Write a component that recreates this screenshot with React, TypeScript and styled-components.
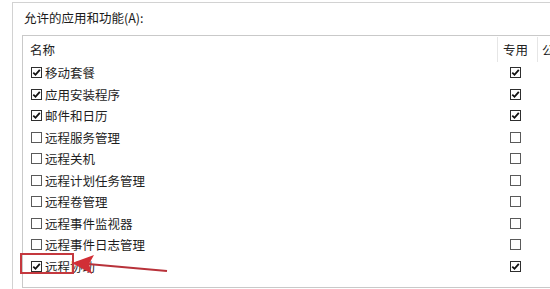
import React, {FC} from 'react';
import styled, {createGlobalStyle} from 'styled-components';

interface IApp {
    name: string;
    allowed: boolean;
    privateNet: boolean;
}

const apps: IApp[] = [
    {name: '移动套餐', allowed: true, privateNet: true},
    {name: '应用安装程序', allowed: true, privateNet: true},
    {name: '邮件和日历', allowed: true, privateNet: true},
    {name: '远程服务管理', allowed: false, privateNet: false},
    {name: '远程关机', allowed: false, privateNet: false},
    {name: '远程计划任务管理', allowed: false, privateNet: false},
    {name: '远程卷管理', allowed: false, privateNet: false},
    {name: '远程事件监视器', allowed: false, privateNet: false},
    {name: '远程事件日志管理', allowed: false, privateNet: false},
    {name: '远程协助', allowed: true, privateNet: true},
];

const GlobalStyle = createGlobalStyle`
  html, body {
    margin: 0;
    padding: 0;
    background: #ffffff;
    overflow: hidden;
  }

  body {
    font-family: "Noto Sans CJK SC", "Liberation Sans", sans-serif;
    color: #1e1e1e;
  }
`;

const Page = styled.div`
  position: relative;
  width: 550px;
  height: 289px;
  overflow: hidden;
  padding: 2px 0 0 12px;
  box-sizing: border-box;
`;

const Group = styled.div`
  width: 620px;
  height: 300px;
  border-left: 1px solid #d2d2d2;
  border-top: 1px solid #d2d2d2;
  padding: 5px 0 0 9px;
  box-sizing: border-box;
`;

const GroupLabel = styled.div`
  height: 20px;
  line-height: 20px;
  padding-left: 2px;
  font-size: 12.5px;
  color: #1a1a1a;
`;

const ListBox = styled.div`
  margin-top: 7px;
  width: 620px;
  height: 253px;
  border: 1px solid #c9c9c9;
  border-right: none;
  box-sizing: border-box;
`;

const Columns = styled.div`
  display: grid;
  grid-template-columns: 474px 40px 1fr;
`;

const HeaderRow = styled(Columns)`
  height: 25px;
  padding-top: 1px;
  font-size: 12.5px;
`;

const HeaderCell = styled.div<{ $divider?: boolean; $center?: boolean }>`
  display: flex;
  align-items: center;
  justify-content: ${p => (p.$center ? 'center' : 'flex-start')};
  padding-left: ${p => (p.$center ? '0' : p.$divider ? '4px' : '7px')};
  border-left: ${p => (p.$divider ? '1px solid #e6e6e6' : 'none')};
  padding-right: ${p => (p.$center ? '4px' : '0')};
  color: #222;
`;

const Row = styled(Columns)`
  height: 21.5px;
  font-size: 12.5px;
`;

const NameCell = styled.div`
  display: flex;
  align-items: center;
  gap: 3px;
  padding-left: 8px;
  white-space: nowrap;
`;

const BoxCell = styled.div`
  display: flex;
  align-items: center;
  justify-content: center;
  padding-right: 3px;
`;

const Box = styled.span<{ $checked: boolean }>`
  display: inline-flex;
  align-items: center;
  justify-content: center;
  width: 11px;
  height: 11px;
  box-sizing: border-box;
  border: 1px solid ${p => (p.$checked ? '#2e2e2e' : '#5a5a5a')};
  background: #fff;
  flex-shrink: 0;
`;

const Overlay = styled.svg`
  position: absolute;
  left: 0;
  top: 0;
  pointer-events: none;
`;

const CheckBox: FC<{ checked: boolean }> = ({checked}) => (
    <Box $checked={checked}>
        {checked &&
            <svg width="9" height="9" viewBox="0 0 9 9">
                <path d="M1.3 4.6 L3.5 6.8 L7.8 1.8" fill="none" stroke="#111" strokeWidth="1.8"/>
            </svg>
        }
    </Box>
);

const App: FC = () => {
    return (
        <>
            <GlobalStyle/>
            <Page>
                <Group>
                    <GroupLabel>允许的应用和功能(A):</GroupLabel>
                    <ListBox>
                        <HeaderRow>
                            <HeaderCell>名称</HeaderCell>
                            <HeaderCell $divider $center>专用</HeaderCell>
                            <HeaderCell $divider>公用</HeaderCell>
                        </HeaderRow>
                        {apps.map(app => (
                            <Row key={app.name}>
                                <NameCell>
                                    <CheckBox checked={app.allowed}/>
                                    {app.name}
                                </NameCell>
                                <BoxCell>
                                    <CheckBox checked={app.privateNet}/>
                                </BoxCell>
                                <div/>
                            </Row>
                        ))}
                    </ListBox>
                </Group>
                <Overlay width="550" height="289" viewBox="0 0 550 289">
                    <rect x="21" y="254" width="52" height="19" fill="none" stroke="#c4383e" strokeWidth="2"/>
                    <line x1="167" y1="271" x2="88" y2="264" stroke="#b8323a" strokeWidth="2.2"/>
                    <polygon points="72,263 94,255 89,264 92,274" fill="#d12f36"/>
                </Overlay>
            </Page>
        </>
    );
};

export default App;
